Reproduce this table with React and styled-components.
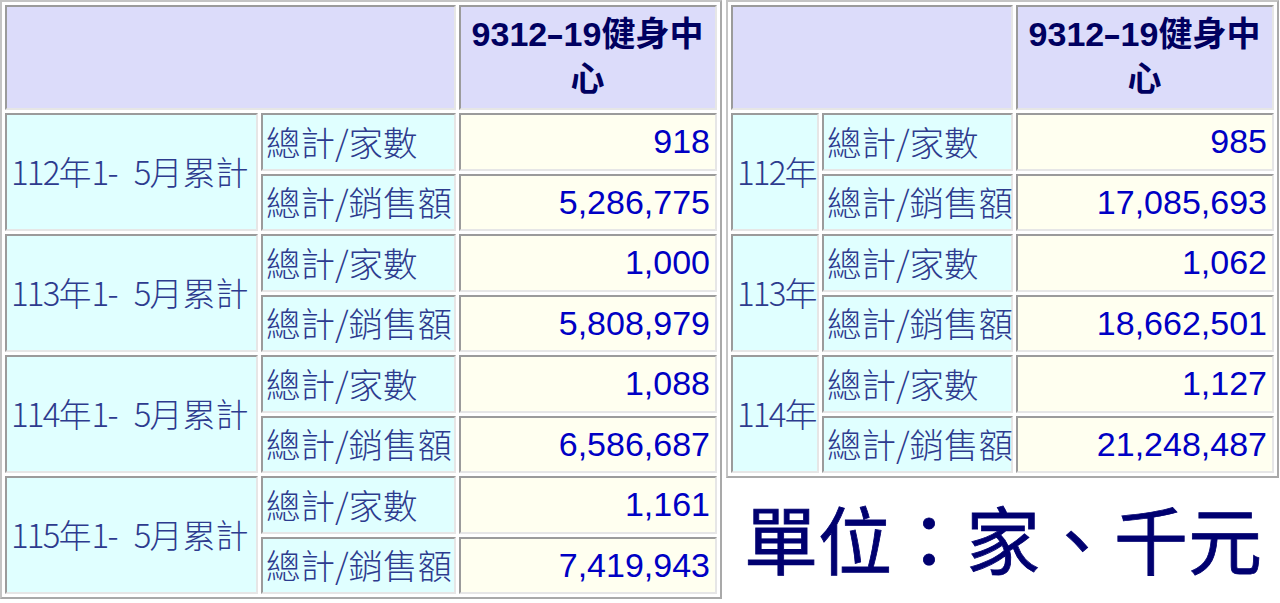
import React from 'react'
import styled, { createGlobalStyle } from 'styled-components'

const GlobalStyle = createGlobalStyle`
  html, body {
    margin: 0;
    padding: 0;
    background: #ffffff;
  }
  body {
    font-family: "Liberation Sans", "Noto Sans CJK TC", sans-serif;
  }
`

const Page = styled.div`
  display: flex;
  align-items: flex-start;
  gap: 4px;
  width: 1280px;
  height: 603px;
  overflow: hidden;
`

const Side = styled.div`
  display: flex;
  flex-direction: column;
  width: 554px;
`

const Table = styled.table`
  table-layout: fixed;
  border-collapse: separate;
  border-spacing: 3px;
  border: 2px solid #a9a9a9;
  border-top-color: #c4c4c4;
  border-left-color: #c4c4c4;
  width: ${(p) => p.$width}px;
  box-sizing: border-box;
`

const Cell = styled.td`
  box-sizing: border-box;
  border: 2px solid #e6e6e6;
  border-top-color: #9b9b9b;
  border-left-color: #9b9b9b;
  padding: 0 4px 0 3px;
  height: 57.5px;
  white-space: nowrap;
  vertical-align: middle;
`

const HeadCell = styled(Cell)`
  background: #dcdcfa;
  height: 105px;
  text-align: center;
  color: #000060;
  font-weight: 700;
  font-size: 34px;
  line-height: 45px;
  white-space: normal;
  padding-bottom: 2px;
`

const Dash = styled.span`
  display: inline-block;
  width: 0.48em;
  text-align: center;
  transform: scaleX(1.6);
`

const LabelCell = styled(Cell)`
  background: #e0ffff;
  color: #2d3b8e;
  font-family: "Noto Sans CJK TC", sans-serif;
  font-weight: 300;
  font-size: 34.5px;
  padding-bottom: 2px;
`

const PeriodCell = styled(LabelCell)`
  font-size: 33px;
  padding: 0 0 2px 4px;
`

const Num = styled.span`
  letter-spacing: -1.8px;
`

const Gap = styled.span`
  letter-spacing: 4px;
`

const ValueCell = styled(Cell)`
  background: #fffff0;
  color: #0000c4;
  font-size: 34px;
  text-align: right;
  padding-right: 5px;
`

const Unit = styled.div`
  margin-top: 11px;
  text-align: center;
  color: #000070;
  font-family: "Noto Sans CJK TC", sans-serif;
  font-weight: 400;
  font-size: 74px;
  line-height: 96px;
  -webkit-text-stroke: 0.8px #000070;
`

const cumulative = [
  { period: '112年1- 5月累計', count: '918', sales: '5,286,775' },
  { period: '113年1- 5月累計', count: '1,000', sales: '5,808,979' },
  { period: '114年1- 5月累計', count: '1,088', sales: '6,586,687' },
  { period: '115年1- 5月累計', count: '1,161', sales: '7,419,943' }
]

const yearly = [
  { period: '112年', count: '985', sales: '17,085,693' },
  { period: '113年', count: '1,062', sales: '18,662,501' },
  { period: '114年', count: '1,127', sales: '21,248,487' }
]

// digits in the period column are drawn narrower, the "- " gap wider
const Period = ({ text }) =>
  text.split(/(\d+|- )/).map((part, i) => {
    if (/^\d+$/.test(part)) return <Num key={i}>{part}</Num>
    if (part === '- ') return <Gap key={i}>{part}</Gap>
    return part
  })

const StatTable = ({ width, cols, rows }) => (
  <Table $width={width}>
    <colgroup>
      {cols.map((c, i) => (
        <col key={i} style={{ width: c }} />
      ))}
    </colgroup>
    <tbody>
      <tr>
        <HeadCell colSpan={2} />
        <HeadCell>
          9312<Dash>-</Dash>19健身中
          <br />心
        </HeadCell>
      </tr>
      {rows.map((r) => (
        <React.Fragment key={r.period}>
          <tr>
            <PeriodCell rowSpan={2}>
              <Period text={r.period} />
            </PeriodCell>
            <LabelCell>總計/家數</LabelCell>
            <ValueCell>{r.count}</ValueCell>
          </tr>
          <tr>
            <LabelCell>總計/銷售額</LabelCell>
            <ValueCell>{r.sales}</ValueCell>
          </tr>
        </React.Fragment>
      ))}
    </tbody>
  </Table>
)

export default function App() {
  return (
    <>
      <GlobalStyle />
      <Page>
        <StatTable width={722} cols={[253, 195, 258]} rows={cumulative} />
        <Side>
          <StatTable width={553} cols={[88, 191, 258]} rows={yearly} />
          <Unit>單位：家、千元</Unit>
        </Side>
      </Page>
    </>
  )
}
